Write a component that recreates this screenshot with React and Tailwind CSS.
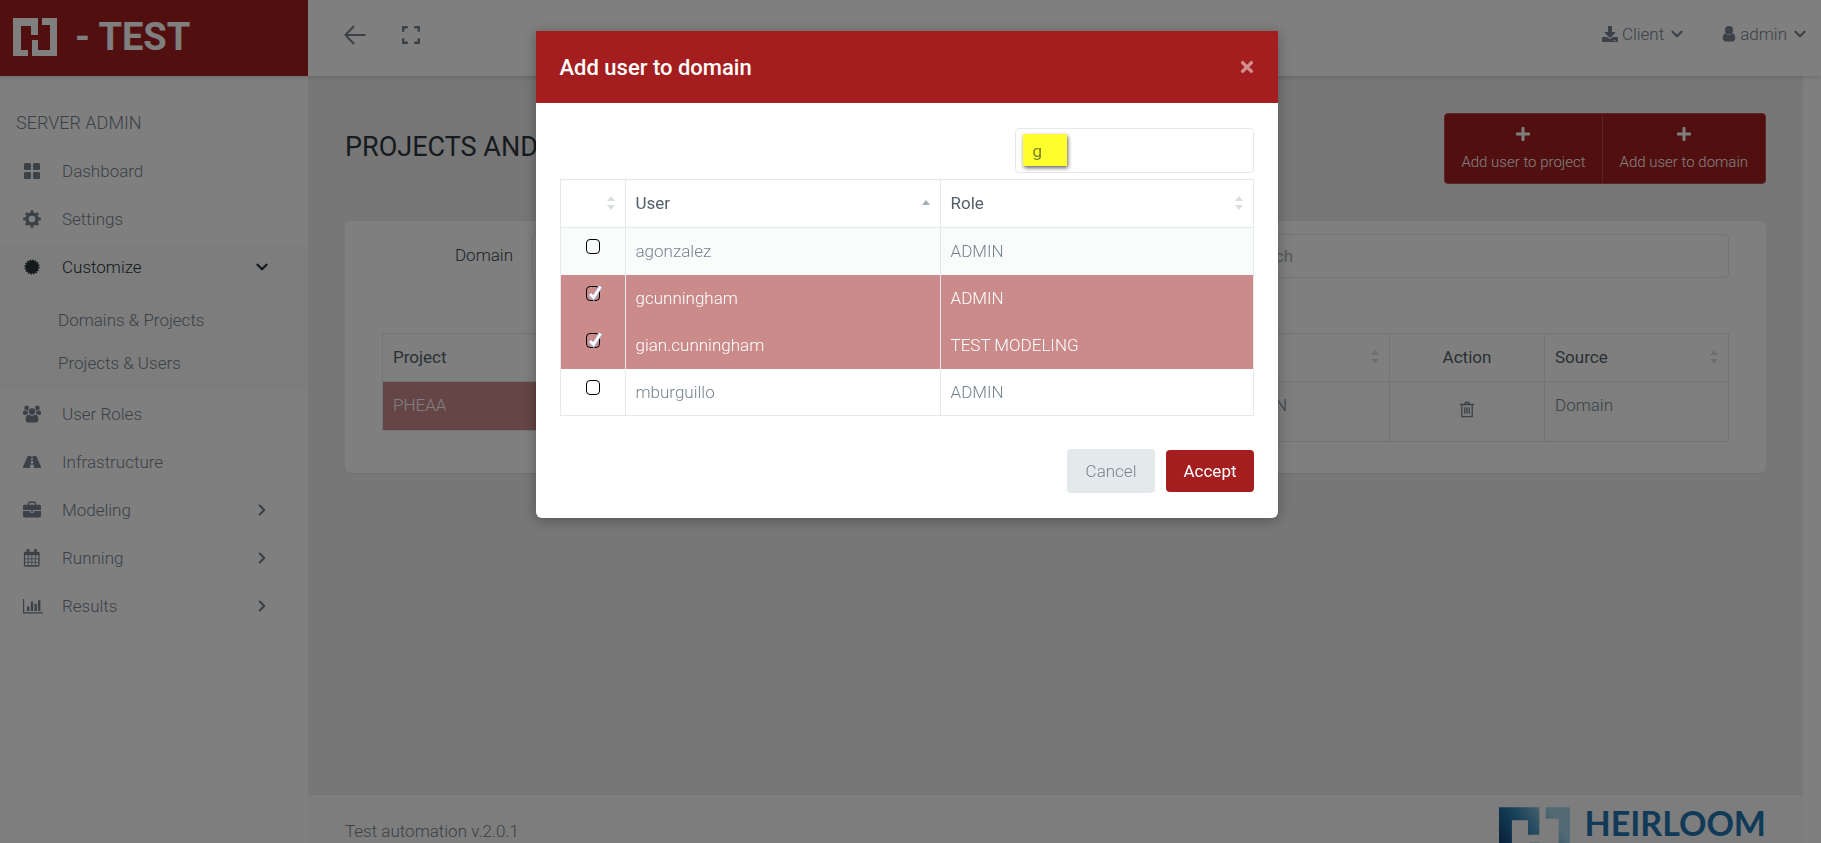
import { FaRoad, FaDownload, FaPlus, FaTimes } from 'react-icons/fa';
import { ChevronDown, ChevronRight } from 'lucide-react';

const LogoMark = ({ className, fill = 'currentColor' }) => (
  <svg viewBox="0 0 44 38" className={className} fill={fill} aria-hidden="true">
    <path d="M0 0h25v17h-7V8H8v24h7v6H0z" />
    <path d="M29 0h15v38H19V22h6v10h12V7h-8z" />
  </svg>
);

const GridIcon = () => (
  <svg width="18" height="18" viewBox="0 0 18 18" fill="currentColor">
    <rect x="1" y="1" width="7" height="7" rx="1.3" />
    <rect x="10" y="1" width="7" height="7" rx="1.3" />
    <rect x="1" y="10" width="7" height="7" rx="1.3" />
    <rect x="10" y="10" width="7" height="7" rx="1.3" />
  </svg>
);

const GearIcon = () => (
  <svg width="18" height="18" viewBox="0 0 18 18" fill="none" stroke="currentColor">
    <circle cx="9" cy="9" r="5" strokeWidth="3.4" />
    <path
      strokeWidth="2.8"
      d="M9 .2v3M9 14.8v3M.2 9h3M14.8 9h3M2.9 2.9l2.2 2.2M12.9 12.9l2.2 2.2M2.9 15.1l2.2-2.2M12.9 5.1l2.2-2.2"
    />
  </svg>
);

const BadgeIcon = () => (
  <svg width="18" height="18" viewBox="0 0 18 18" fill="currentColor">
    <circle cx="9" cy="9" r="6.5" />
    <circle cx="9" cy="9" r="6.7" fill="none" stroke="currentColor" strokeWidth="1.8" strokeDasharray="1.5 1.13" />
  </svg>
);

const UsersIcon = () => (
  <svg width="18" height="18" viewBox="0 0 18 18" fill="currentColor">
    <circle cx="3.6" cy="2.9" r="2.3" />
    <circle cx="14.4" cy="2.9" r="2.3" />
    <path d="M0 8.2C0 6 .9 5.2 2 5.4c1 .5 2.2.4 3.2 0C4.6 6.5 4.5 7.800 5 9 4 9.1 3.3 9.4 2.8 10H1.5C.5 10 0 9.3 0 8.200z" />
    <path d="M18 8.2c0-2.2-.9-3-2-2.800-1 .5-2.2.4-3.2 0 .6 1.1.7 2.4.2 3.600 1 .1 1.7.4 2.2 1h1.3c1 0 1.5-.7 1.5-1.800z" />
    <circle cx="9" cy="6.5" r="3.3" />
    <path d="M2.5 15c0-3.500 1-5.300 3.300-5.300 2 1.500 4.400 1.500 6.400 0 2.300 0 3.300 1.800 3.300 5.300 0 1.600-1 2.500-2.500 2.500H5c-1.500 0-2.500-.9-2.500-2.500z" />
  </svg>
);

const BriefcaseIcon = () => (
  <svg width="18" height="18" viewBox="0 0 18 18" fill="currentColor">
    <path d="M5.5 4V2.6C5.5 1.8 6 1.3 6.8 1.3h4.4c.8 0 1.3.5 1.3 1.3V4" fill="none" stroke="currentColor" strokeWidth="1.4" />
    <path d="M0 9V5.400C0 4.400.7 3.700 1.700 3.700h14.600c1 0 1.700.7 1.700 1.700V9z" />
    <path d="M0 10h7v1.700h4V10h7v4.700c0 1-.7 1.700-1.700 1.700H1.700C.7 16.400 0 15.700 0 14.700z" />
    <rect x="8" y="9.5" width="2" height="1.3" />
  </svg>
);

const CalendarIcon = () => (
  <svg width="18" height="18" viewBox="0 0 18 18" fill="none" stroke="currentColor">
    <rect x="1.5" y="3.5" width="14.5" height="13.5" rx=".8" strokeWidth="1.3" />
    <path d="M1.5 4.7h14.5" strokeWidth="3" />
    <path d="M5 .8v3.400M12.500 .8v3.400" strokeWidth="2.8" strokeLinecap="round" />
    <path d="M1.500 9.800h14.500M1.500 13.300h14.500M5.200 6v11M8.800 6v11M12.400 6v11" strokeWidth=".8" />
  </svg>
);

const ChartIcon = () => (
  <svg width="20" height="18" viewBox="0 0 20 18" fill="currentColor">
    <path d="M0 2h1.200v13.300H20v1.200H0z" />
    <path d="M4 9.500h2.400V14H4zM7.800 4.500h2.400V14H7.800zM11.500 6.700h2.400V14h-2.400zM15 3.300h2.400V14H15z" />
  </svg>
);

const UserIcon = () => (
  <svg width="14" height="18" viewBox="0 0 14 18" fill="currentColor">
    <circle cx="7" cy="5.2" r="4.1" />
    <path d="M.8 13.300c0-3.200 1-4.800 2.700-5 2 2 5 2 7 0 1.700.2 2.700 1.800 2.700 5 0 1.900-1 3.200-2.600 3.200H3.400c-1.600 0-2.600-1.300-2.600-3.200z" />
  </svg>
);

const TrashIcon = () => (
  <svg width="14" height="17" viewBox="0 0 14 17" fill="none" stroke="currentColor" strokeWidth="1.3">
    <path d="M0 3.500h14M4.500 3.500c0-3 5-3 5 0M1.800 3.500v12.200h10.400V3.500M4.800 6.300v6.500M7 6.300v6.500M9.200 6.300v6.500" />
  </svg>
);

const Sort = ({ dir }) => (
  <svg width="8" height="16" viewBox="0 0 8 16" className="shrink-0" aria-hidden="true">
    {dir === 'asc' ? (
      <path d="M4 5l4 5H0z" fill="#a3afb7" />
    ) : (
      <path d="M4 1l4 5H0zM4 15l4-5H0z" fill="#d9dee1" />
    )}
  </svg>
);

const menu = [
  { label: 'Dashboard', icon: GridIcon },
  { label: 'Settings', icon: GearIcon },
  { label: 'Customize', icon: BadgeIcon, open: true, children: ['Domains & Projects', 'Projects & Users'] },
  { label: 'User Roles', icon: UsersIcon },
  { label: 'Infrastructure', icon: () => <FaRoad size={18} /> },
  { label: 'Modeling', icon: BriefcaseIcon, more: true },
  { label: 'Running', icon: CalendarIcon, more: true },
  { label: 'Results', icon: ChartIcon, more: true },
];

const users = [
  { name: 'agonzalez', role: 'ADMIN' },
  { name: 'gcunningham', role: 'ADMIN', selected: true },
  { name: 'gian.cunningham', role: 'TEST MODELING', selected: true },
  { name: 'mburguillo', role: 'ADMIN' },
];

const Header = () => (
  <header className="relative z-10 flex h-[76px] shrink-0 bg-white shadow-[0_2px_4px_rgba(0,0,0,0.12)]">
    <div className="flex w-[308px] items-center gap-[18px] bg-[#a41e1f] pb-0.5 pl-[13px] text-white">
      <LogoMark className="h-[38px] w-11" />
      <span className="text-[38px] font-bold leading-none">- TEST</span>
    </div>
    <div className="flex flex-1 items-center justify-between pb-2 pl-9 pr-3 text-[#76838f]">
      <div className="flex items-center gap-9 pt-0.5">
        <button aria-label="Back">
          <svg width="22" height="20" viewBox="0 0 22 20" fill="none" stroke="currentColor" strokeWidth="2">
            <path d="M1.5 10H21.5M10 1L1.500 10l8.500 9" />
          </svg>
        </button>
        <button aria-label="Full screen">
          <svg width="18" height="18" viewBox="0 0 18 18" fill="none" stroke="currentColor" strokeWidth="2.4">
            <path d="M1.200 5.800V1.200h4.600M12.200 1.200h4.600v4.600M16.800 12.200v4.600h-4.600M5.800 16.800H1.200v-4.600" />
          </svg>
        </button>
      </div>
      <div className="flex items-center gap-9">
        <button className="flex items-center gap-1">
          <FaDownload size={16} />
          <span>Client</span>
          <ChevronDown size={18} strokeWidth={3} />
        </button>
        <button className="flex items-center gap-1">
          <UserIcon />
          <span>admin</span>
          <ChevronDown size={18} strokeWidth={3} />
        </button>
      </div>
    </div>
  </header>
);

const Sidebar = () => (
  <nav className="w-[308px] shrink-0 bg-white pt-[33px] text-[#76838f] shadow-[0_2px_4px_rgba(0,0,0,0.12)]">
    <h5 className="mb-[10px] pl-4 text-[18px] leading-7">SERVER ADMIN</h5>
    <ul>
      {menu.map(({ label, icon: Icon, open, more, children }) => (
        <li key={label} className={open ? 'bg-[#fafafa]' : ''}>
          <a
            href="#"
            className={`flex h-12 items-center pl-[23px] pr-[37px] ${open ? 'text-[#263238]' : ''}`}
          >
            <span className="w-[39px]"><Icon /></span>
            <span className="flex-1">{label}</span>
            {open && <ChevronDown size={18} strokeWidth={3} />}
            {more && <ChevronRight size={18} strokeWidth={3} />}
          </a>
          {children && (
            <ul className="pb-1.5 pt-[7px]">
              {children.map((c) => (
                <li key={c}>
                  <a href="#" className="flex h-[43px] items-center pl-[58px]">{c}</a>
                </li>
              ))}
            </ul>
          )}
        </li>
      ))}
    </ul>
  </nav>
);

const th = 'h-12 border border-[#e4eaec] px-2.5 pb-0.5 text-left font-normal text-[#526069]';
const td = 'border border-[#e4eaec] px-2.5 pt-[11px] align-top';

const Content = () => (
  <main className="flex-1 px-[37px] pt-[37px]">
    <div className="flex items-start justify-between">
      <h1 className="pt-4 text-[27px] font-normal leading-9 text-[#2a363d]">PROJECTS AND USERS</h1>
      <div className="flex overflow-hidden rounded border border-[#b84a4b] bg-[#a41e1f] text-[15px] text-white">
        <button className="flex h-[69px] flex-col items-center gap-2 px-4 pt-3">
          <FaPlus size={16} />
          <span className="leading-6">Add user to project</span>
        </button>
        <button className="flex h-[69px] flex-col items-center gap-2 border-l border-[#b84a4b] px-[17px] pt-3">
          <FaPlus size={16} />
          <span className="leading-6">Add user to domain</span>
        </button>
      </div>
    </div>

    <section className="mt-[37px] rounded-md bg-white px-[37px] pb-[31px] pt-[13px] shadow-[0_1px_1px_rgba(0,0,0,0.05)]">
      <div className="flex items-start">
        <label htmlFor="domain" className="w-[131px] pt-[7px] text-right leading-7 text-[#37474f]">Domain</label>
        <select id="domain" className="ml-[19px] h-[47px] flex-1 appearance-none rounded border border-[#e4eaec] px-4" />
        <input
          aria-label="Search"
          placeholder="Search"
          className="ml-[120px] h-11 w-[505px] rounded border border-[#e4eaec] px-4 font-normal placeholder:text-[#a3afb7]"
        />
      </div>

      <div className="mt-[52px] flex items-start gap-8">
        <table className="w-[500px] border-collapse">
          <thead>
            <tr><th className={th}>Project</th></tr>
          </thead>
          <tbody>
            <tr className="bg-[#ca8b8a] text-white"><td className={`${td} h-[49px]`}>PHEAA</td></tr>
          </tbody>
        </table>
        <table className="flex-1 border-collapse">
          <thead>
            <tr>
              <th className={th} />
              <th className={`${th} w-[166px]`}>
                <div className="flex items-center justify-end"><Sort /></div>
              </th>
              <th className={`${th} w-[155px]`}><div className="text-center">Action</div></th>
              <th className={`${th} w-[184px]`}>
                <div className="flex items-center justify-between">Source <Sort /></div>
              </th>
            </tr>
          </thead>
          <tbody>
            <tr className="bg-[#fafcfb]">
              <td className={`${td} h-[60px]`} />
              <td className={td}>ADMIN</td>
              <td className={`${td} text-center`}>
                <button aria-label="Delete" className="mt-2"><TrashIcon /></button>
              </td>
              <td className={td}>Domain</td>
            </tr>
          </tbody>
        </table>
      </div>
    </section>
  </main>
);

const Footer = () => (
  <footer className="flex h-[49px] shrink-0 items-start justify-between overflow-hidden border-t border-[#e4eaec] bg-[#fafafa] px-[37px] pt-3">
    <span className="pt-3 leading-6">Test automation v.2.0.1</span>
    <div className="flex items-start gap-[14px]">
      <svg width="0" height="0" className="absolute">
        <linearGradient id="mark" gradientUnits="userSpaceOnUse" x1="0" y1="30" x2="36" y2="8">
          <stop offset="0" stopColor="#0d2f66" />
          <stop offset=".5" stopColor="#2b7fb0" />
          <stop offset="1" stopColor="#a6d6ea" />
        </linearGradient>
      </svg>
      <LogoMark className="h-[62px] w-[71px]" fill="url(#mark)" />
      <span className="font-['Lato'] text-[34px] font-bold leading-8 text-[#2074b0]">HEIRLOOM</span>
    </div>
  </footer>
);

const Check = ({ label, checked }) => (
  <label className="relative block h-[15px] w-[14px]">
    <input
      type="checkbox"
      aria-label={label}
      defaultChecked={checked}
      className="peer block h-[15px] w-[14px] appearance-none rounded border border-black"
    />
    <svg
      viewBox="0 0 16 16"
      className="pointer-events-none absolute -top-px left-px hidden h-4 w-4 peer-checked:block"
      fill="none"
    >
      <path d="M3 9.5l3.500 3.500L13.500 1.500" stroke="#a9b6dc" strokeWidth="4" />
      <path d="M3 9l3.500 3.500L13.500 1.500" stroke="#fff" strokeWidth="2.6" />
    </svg>
  </label>
);

const UserModal = () => (
  <div className="fixed inset-0 z-20 flex items-start justify-center bg-black/50 pr-2 pt-[31px]">
    <div
      role="dialog"
      aria-label="Add user to domain"
      className="w-full max-w-[742px] rounded-b-md bg-white shadow-[0_2px_14px_rgba(0,0,0,0.3)]"
    >
      <div className="flex h-[72px] items-center justify-between bg-[#a41e1f] px-6 text-white">
        <h4 className="pt-px text-[22px] font-medium">Add user to domain</h4>
        <button aria-label="Close" className="opacity-50"><FaTimes size={18} className="-mr-0.5" /></button>
      </div>

      <div className="px-6 pb-[25px] pt-[25px]">
        <div className="relative ml-auto w-[239px]">
          <input
            aria-label="Filter users"
            defaultValue="g"
            className="block h-[45px] w-full rounded border border-[#e4eaec] px-[17px] font-normal text-[#76838f] outline-none"
          />
          <span className="pointer-events-none absolute left-2 top-1.5 h-8 w-11 bg-[#ffff2e] mix-blend-multiply shadow-[1px_2px_4px_rgba(0,0,0,0.6)]" />
        </div>

        <table className="mt-1.5 w-full table-fixed border-collapse">
          <thead>
            <tr>
              <th className={`${th} w-[65px]`}><div className="flex justify-end"><Sort /></div></th>
              <th className={`${th} w-[315px]`}>
                <div className="flex items-center justify-between">User <Sort dir="asc" /></div>
              </th>
              <th className={th}>
                <div className="flex items-center justify-between">Role <Sort /></div>
              </th>
            </tr>
          </thead>
          <tbody>
            {users.map((u) => (
              <tr
                key={u.name}
                className={u.selected ? 'bg-[#ca8b8a] text-white' : 'first:bg-[#fafcfb]'}
              >
                <td className="h-[47px] border-x border-[#e4eaec] pt-[11px] align-top">
                  <div className="flex justify-center"><Check label={u.name} checked={u.selected} /></div>
                </td>
                <td className="border-x border-[#e4eaec] px-2.5">{u.name}</td>
                <td className="border-x border-[#e4eaec] px-2.5">{u.role}</td>
              </tr>
            ))}
          </tbody>
          <tfoot><tr><td colSpan={3} className="border-t border-[#e4eaec]" /></tr></tfoot>
        </table>

        <div className="mt-[33px] flex items-center justify-end gap-[11px]">
          <button className="h-11 rounded bg-[#e4eaec] px-[19px] text-[#76838f]">Cancel</button>
          <button className="h-[42px] rounded-sm bg-[#a41e1f] px-[17px] font-normal text-white">Accept</button>
        </div>
      </div>
    </div>
  </div>
);

const App = () => (
  <div className="flex h-screen flex-col overflow-hidden bg-white font-['Roboto',sans-serif] text-[17px] font-light leading-6 text-[#76838f]">
    <Header />
    <div className="flex min-h-0 flex-1">
      <Sidebar />
      <div className="mr-[18px] flex min-w-0 flex-1 flex-col bg-[#eeeeee]">
        <Content />
        <Footer />
      </div>
    </div>
    <UserModal />
  </div>
);

export default App;
